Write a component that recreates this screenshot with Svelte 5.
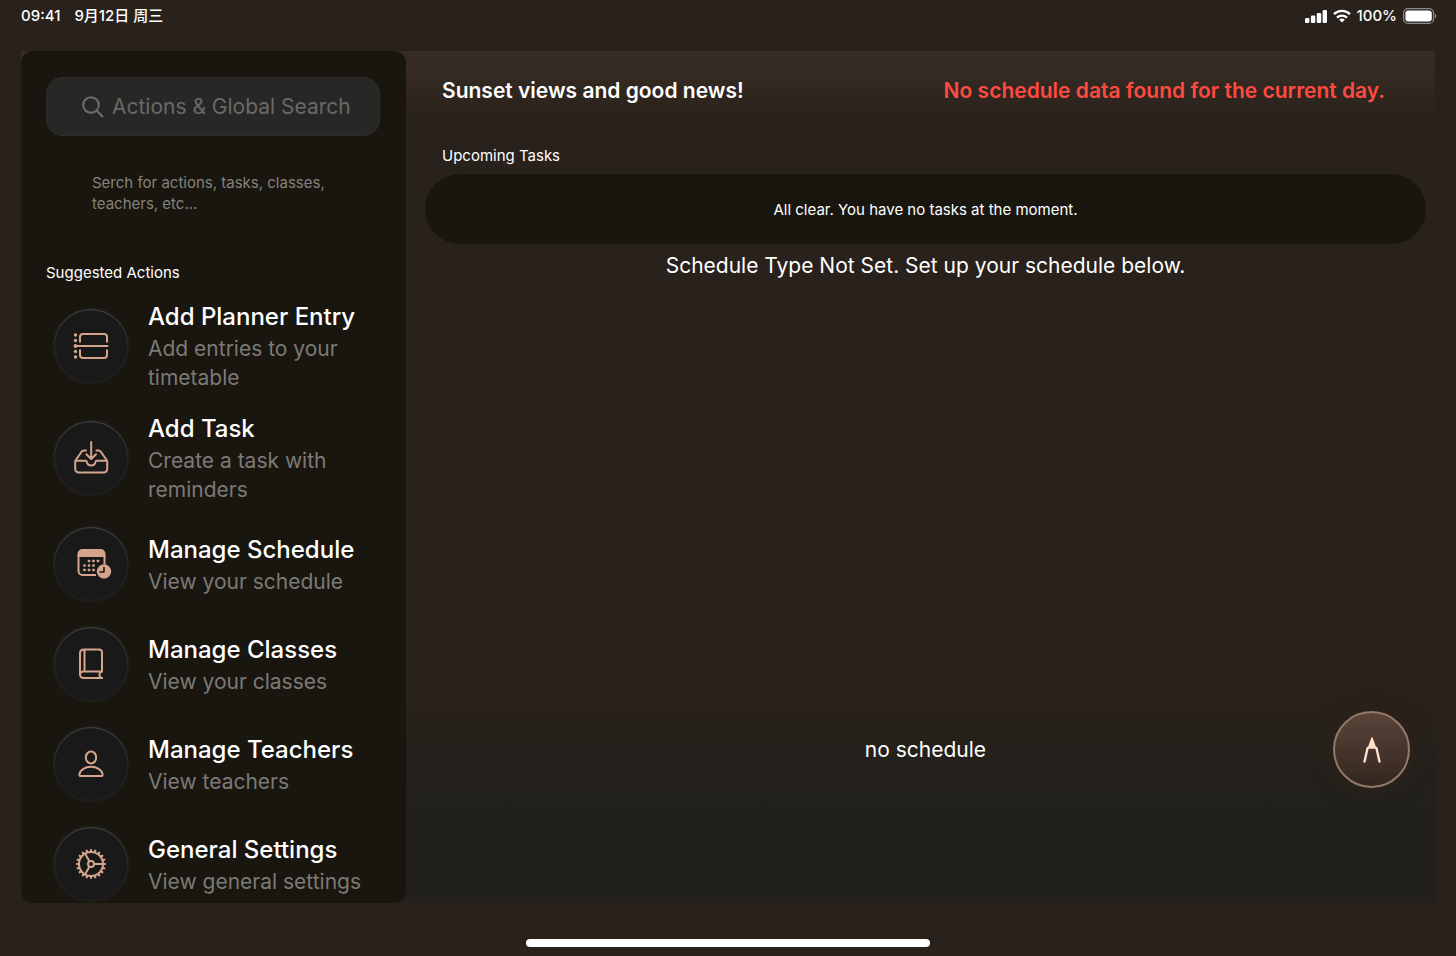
<script lang="ts">
  type Action = { icon: string; title: string; text: string };

  const actions: Action[] = [
    { icon: 'planner', title: 'Add Planner Entry', text: 'Add entries to your timetable' },
    { icon: 'task', title: 'Add Task', text: 'Create a task with reminders' },
    { icon: 'schedule', title: 'Manage Schedule', text: 'View your schedule' },
    { icon: 'classes', title: 'Manage Classes', text: 'View your classes' },
    { icon: 'teachers', title: 'Manage Teachers', text: 'View teachers' },
    { icon: 'settings', title: 'General Settings', text: 'View general settings' }
  ];

  const dots = [[16, 15], [20.5, 15], [25, 15], [11.5, 19.5], [16, 19.5], [20.5, 19.5], [11.5, 24], [16, 24], [20.5, 24]];
  const teeth = Array.from({ length: 20 }, (_, i) => i * 18);
  let query = $state('');
</script>

<div class="app">
  <header class="status">
    <div class="status-side">
      <span>09:41</span>
      <span>9月12日 周三</span>
    </div>
    <div class="status-side right">
      <svg width="22" height="14" viewBox="0 0 22 14" fill="#fff" aria-hidden="true">
        <rect x="0" y="9" width="4.4" height="5" rx="1.2" />
        <rect x="5.9" y="6.5" width="4.4" height="7.5" rx="1.2" />
        <rect x="11.8" y="4" width="4.4" height="10" rx="1.2" />
        <rect x="17.6" y="1" width="4.4" height="13" rx="1.2" />
      </svg>
      <svg width="18" height="14" viewBox="0 0 18 14" fill="none" stroke="#fff" stroke-width="2.4" aria-hidden="true">
        <path d="M1 5.2a11.4 11.4 0 0 1 16 0" />
        <path d="M4 8.6a7.2 7.2 0 0 1 10 0" />
        <path d="M9 13.6 6.2 10.8a4 4 0 0 1 5.6 0z" fill="#fff" stroke="none" />
      </svg>
      <span>100%</span>
      <svg class="battery" width="34" height="16" viewBox="0 0 34 16" aria-hidden="true">
        <rect x="0.6" y="0.6" width="30" height="14.8" rx="4.5" fill="none" stroke="#8f8b88" stroke-width="1.2" />
        <rect x="2.4" y="2.4" width="26.4" height="11.2" rx="3" fill="#fff" />
        <path d="M32 5.5c1.6.6 1.6 4.4 0 5z" fill="#8f8b88" />
      </svg>
    </div>
  </header>

  <main>
    <aside>
      <label class="search">
        <svg width="22" height="22" viewBox="0 0 22 22" fill="none" stroke="#6f6e6d" stroke-width="2" stroke-linecap="round" aria-hidden="true">
          <circle cx="9" cy="9" r="7.8" />
          <path d="M14.8 14.8 20.5 20.5" />
        </svg>
        <input type="text" aria-label="Search" placeholder="Actions & Global Search" bind:value={query} />
      </label>
      <p class="hint">Serch for actions, tasks, classes, teachers, etc...</p>
      <h2>Suggested Actions</h2>
      <div class="actions">
        {#each actions as action}
          <button class="action">
            <span class="circle">
              <svg width="36" height="36" viewBox="0 0 36 36" fill="none" stroke="#d4a58c" stroke-width="2" stroke-linecap="round" stroke-linejoin="round" aria-hidden="true">
                {#if action.icon === 'planner'}
                  <path d="M7 14.5V9a3 3 0 0 1 3-3h21a3 3 0 0 1 3 3v5.5M7 21.5V27a3 3 0 0 0 3 3h21a3 3 0 0 0 3-3v-5.5" stroke-linecap="butt" />
                  <path d="M3 18h31.5" />
                  <g fill="#d4a58c" stroke="none">
                    <circle cx="2.5" cy="7" r="1.7" />
                    <circle cx="2.5" cy="12.5" r="1.7" />
                    <circle cx="2.5" cy="18" r="2" />
                    <circle cx="2.5" cy="23.5" r="1.7" />
                    <circle cx="2.5" cy="29" r="1.7" />
                  </g>
                {:else if action.icon === 'task'}
                  <path d="M13 10.5h-2a3 3 0 0 0-2.4 1.2L2.8 20a3 3 0 0 0-.6 1.8V29a3.5 3.5 0 0 0 3.5 3.5h25a3.5 3.5 0 0 0 3.5-3.5v-7.2a3 3 0 0 0-.6-1.8l-5.8-8.3a3 3 0 0 0-2.4-1.2h-2" />
                  <path d="M2.5 20.8h10.3c.7 0 1 .5 1.1 1.2a4.4 4.4 0 0 0 8.6 0c.1-.7.4-1.2 1.1-1.2h10.3" />
                  <path d="M18.2 2v16.5M13.4 14.2l4.8 4.8 4.8-4.8" />
                {:else if action.icon === 'schedule'}
                  <path d="M5.5 10V8a4 4 0 0 1 4-4h18a4 4 0 0 1 4 4v2z" fill="#d4a58c" />
                  <path d="M5.5 9v16a4 4 0 0 0 4 4h13.5M31.5 9v9.5" stroke-linecap="butt" />
                  <g fill="#d4a58c" stroke="none">
                    {#each dots as [x, y]}
                      <rect x={x - 1.3} y={y - 1.3} width="2.6" height="2.6" rx="0.8" />
                    {/each}
                    <circle cx="31" cy="25.5" r="7.2" />
                  </g>
                  <path d="M31 21.5v4.5h-4" stroke="#19191a" stroke-width="1.6" />
                {:else if action.icon === 'classes'}
                  <path d="M29 25.5V6.5A3 3 0 0 0 26 3.5H10.5A3.5 3.5 0 0 0 7 7v21.5a3.5 3.5 0 0 0 3.5 3.5H29M29 25.5H10.5A3.3 3.3 0 0 0 7 28.8M11.5 4v21.5" />
                  <path d="M29 25.5c-1.7 0-2.5 1.5-2.5 3.2S27.3 32 29 32" />
                {:else if action.icon === 'teachers'}
                  <ellipse cx="18" cy="11.5" rx="5.2" ry="6" />
                  <path d="M7.8 30c-1.1 0-1.6-.7-1.4-1.7C7.2 24 12 20.8 18 20.8S28.8 24 29.6 28.3c.2 1-.3 1.7-1.4 1.7z" />
                {:else}
                  <circle cx="18" cy="18" r="12" />
                  <circle cx="18" cy="18" r="3" />
                  <path d="M21 18h9M16.5 15.4 12 7.6M16.5 20.6 12 28.4" />
                  {#each teeth as angle}
                    <path d="M18 5V4" stroke-width="2.2" transform="rotate({angle} 18 18)" />
                  {/each}
                {/if}
              </svg>
            </span>
            <span class="copy">
              <span class="title">{action.title}</span>
              <span class="text">{action.text}</span>
            </span>
          </button>
        {/each}
      </div>
    </aside>

    <section class="content">
      <div class="top">
        <h1>Sunset views and good news!</h1>
        <strong>No schedule data found for the current day.</strong>
      </div>
      <h2 class="tasks-title">Upcoming Tasks</h2>
      <div class="tasks">All clear. You have no tasks at the moment.</div>
      <p class="notice">Schedule Type Not Set. Set up your schedule below.</p>
      <p class="empty">no schedule</p>
      <button class="fab" aria-label="Open tools">
        <svg width="20" height="28" viewBox="0 0 20 28" aria-hidden="true">
          <path d="M10 2 13.6 12H6.4z" fill="#ffe0cb" stroke="#ffe0cb" stroke-width="1.5" stroke-linejoin="round" />
          <path d="M5.6 12 2.5 25.5M14.4 12 17.5 25.5" fill="none" stroke="#ffe0cb" stroke-width="2.4" stroke-linecap="round" />
        </svg>
      </button>
    </section>
  </main>

  <footer><div class="home"></div></footer>
</div>

<style>
  :global(body) {
    margin: 0;
    background: #29211b;
  }
  .app {
    display: flex;
    flex-direction: column;
    height: 100vh;
    color: #fff;
    font-family: Inter, "Noto Sans CJK SC", sans-serif;
  }
  h1, h2, p {
    margin: 0;
    font-weight: 400;
  }
  button {
    font: inherit;
    color: inherit;
    border: none;
    background: none;
    padding: 0;
    text-align: left;
    cursor: pointer;
  }
  .status {
    display: flex;
    justify-content: space-between;
    height: 31px;
    padding: 0 21px;
    margin-bottom: 20px;
    font-size: 15px;
    font-weight: 500;
    line-height: 20px;
  }
  .status-side {
    display: flex;
    align-items: center;
    gap: 14px;
  }
  .status-side.right {
    gap: 6px;
  }
  .battery {
    margin-right: -2px;
  }
  main {
    display: flex;
    flex: 1;
    min-height: 0;
    margin: 0 21px;
    background: linear-gradient(#372c24 0, #352b23 20px, #29211b 68px, #29211b calc(100% - 200px), #21201b calc(100% - 95px));
  }
  aside {
    flex: none;
    box-sizing: border-box;
    width: 385px;
    padding: 26px 26px 0 25px;
    border-radius: 12px;
    background: #19160f;
    overflow: hidden;
  }
  .search {
    display: flex;
    align-items: center;
    gap: 8px;
    box-sizing: border-box;
    height: 59px;
    padding: 0 24px 0 35px;
    border: 1px solid #2d2d2b;
    border-radius: 16px;
    background: #272726;
  }
  .search svg {
    flex: none;
  }
  .search input {
    flex: 1;
    min-width: 0;
    padding: 0;
    border: none;
    outline: none;
    background: none;
    color: #fff;
    font: 400 21px Inter, sans-serif;
  }
  .search input::placeholder {
    color: #6a6968;
    opacity: 1;
  }
  .hint {
    margin: 36px 40px 0 46px;
    color: #85827c;
    font-size: 15px;
    line-height: 21px;
  }
  h2 {
    font-size: 15px;
    line-height: 20px;
  }
  aside h2 {
    margin-top: 49px;
  }
  .actions {
    display: flex;
    flex-direction: column;
    gap: 20px;
    margin-top: 17px;
  }
  .action {
    display: flex;
    align-items: center;
    gap: 20px;
    min-height: 80px;
    padding-left: 8px;
  }
  .circle {
    display: flex;
    flex: none;
    align-items: center;
    justify-content: center;
    width: 74px;
    height: 74px;
    border-radius: 50%;
    background: #19191a;
    box-shadow: inset 0 1px 1px #454542, inset 0 0 0 1px #222221, 0 0 0 2px #1d1b17;
  }
  .circle svg {
    overflow: visible;
  }
  .copy {
    display: flex;
    flex-direction: column;
  }
  .title {
    font-size: 24px;
    font-weight: 500;
    line-height: 34px;
  }
  .text {
    color: #7c7a76;
    font-size: 21px;
    line-height: 29px;
  }
  .content {
    position: relative;
    display: flex;
    flex: 1;
    flex-direction: column;
    min-width: 0;
    padding: 0 9px 0 19px;
  }
  .top {
    display: flex;
    justify-content: space-between;
    padding: 25px 41px 0 17px;
    font-size: 21px;
    line-height: 30px;
  }
  h1, strong {
    font-size: 21px;
    font-weight: 600;
  }
  strong {
    color: #ff4a40;
  }
  .tasks-title {
    margin: 40px 17px 8px;
  }
  .tasks {
    padding: 26px 25px 24px;
    border-radius: 35px;
    background: #19160f;
    font-size: 15px;
    line-height: 20px;
    text-align: center;
  }
  .notice, .empty {
    font-size: 21px;
    line-height: 30px;
    text-align: center;
  }
  .notice {
    margin-top: 7px;
  }
  .empty {
    margin-top: auto;
    padding-bottom: 138px;
  }
  .fab {
    position: absolute;
    right: 25px;
    bottom: 115px;
    display: flex;
    align-items: center;
    justify-content: center;
    width: 77px;
    height: 77px;
    border: 2px solid #93796b;
    border-radius: 50%;
    background: linear-gradient(#5a4439, #33261f);
    box-shadow: 0 2px 20px rgba(60, 36, 24, 0.5);
  }
  footer {
    display: flex;
    justify-content: center;
    height: 17px;
    padding-top: 36px;
  }
  .home {
    width: 404px;
    height: 8px;
    border-radius: 4px;
    background: #fff;
  }
</style>
